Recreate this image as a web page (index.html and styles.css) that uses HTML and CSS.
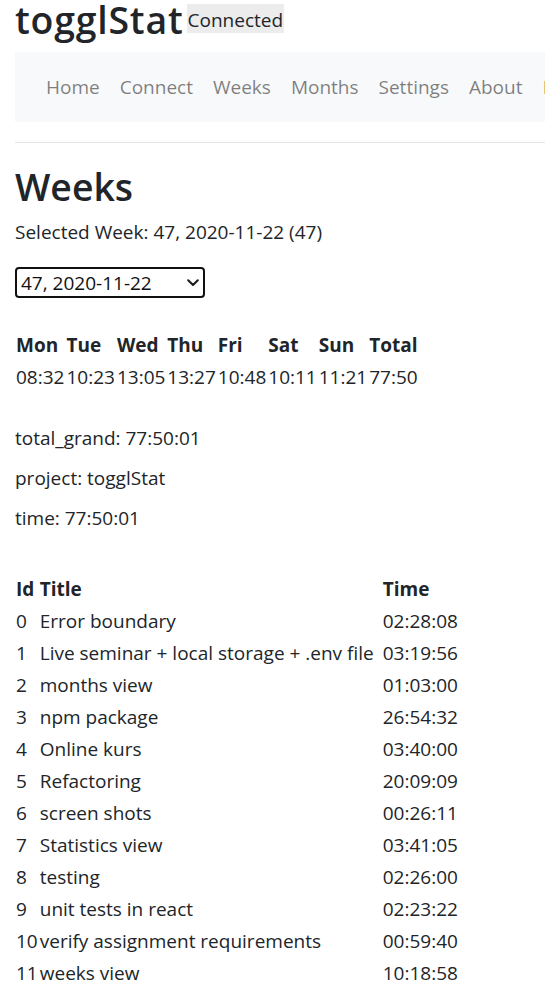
FILE: index.html
```html
<!DOCTYPE html>
<html lang="en">
<head>
<meta charset="utf-8">
<title>togglStat</title>
<link rel="stylesheet" href="styles.css">
</head>
<body>
<div class="app">
  <header class="brand">
    <h1 class="brand-title">togglStat</h1>
    <span class="status">Connected</span>
  </header>
  <nav class="navbar">
    <a class="nav-link" href="#">Home</a>
    <a class="nav-link" href="#">Connect</a>
    <a class="nav-link" href="#">Weeks</a>
    <a class="nav-link" href="#">Months</a>
    <a class="nav-link" href="#">Settings</a>
    <a class="nav-link" href="#">About</a>
    <a class="nav-link nav-warn" href="#">Logout</a>
  </nav>
  <hr class="divider">
  <main>
    <h1 class="page-title">Weeks</h1>
    <p class="selected">Selected Week: 47, 2020-11-22 (47)</p>
    <div class="select-wrap">
      <select class="week-select"><option>47, 2020-11-22</option></select>
      <svg class="chev" width="12" height="8" viewBox="0 0 12 8"><polyline points="1.2,1.2 6,6 10.8,1.2" fill="none" stroke="#1a1a1a" stroke-width="2" stroke-linecap="round" stroke-linejoin="round"/></svg>
    </div>
    <table class="days">
      <thead>
        <tr><th>Mon</th><th>Tue</th><th>Wed</th><th>Thu</th><th>Fri</th><th>Sat</th><th>Sun</th><th>Total</th></tr>
      </thead>
      <tbody>
        <tr><td>08:32</td><td>10:23</td><td>13:05</td><td>13:27</td><td>10:48</td><td>10:11</td><td>11:21</td><td>77:50</td></tr>
      </tbody>
    </table>
    <div class="totals">
      <p>total_grand: 77:50:01</p>
      <p>project: togglStat</p>
      <p>time: 77:50:01</p>
    </div>
    <table class="items">
      <thead>
        <tr><th>Id</th><th class="col-title">Title</th><th>Time</th></tr>
      </thead>
      <tbody>
        <tr><td>0</td><td>Error boundary</td><td>02:28:08</td></tr>
        <tr><td>1</td><td>Live seminar + local storage + .env file</td><td>03:19:56</td></tr>
        <tr><td>2</td><td>months view</td><td>01:03:00</td></tr>
        <tr><td>3</td><td>npm package</td><td>26:54:32</td></tr>
        <tr><td>4</td><td>Online kurs</td><td>03:40:00</td></tr>
        <tr><td>5</td><td>Refactoring</td><td>20:09:09</td></tr>
        <tr><td>6</td><td>screen shots</td><td>00:26:11</td></tr>
        <tr><td>7</td><td>Statistics view</td><td>03:41:05</td></tr>
        <tr><td>8</td><td>testing</td><td>02:26:00</td></tr>
        <tr><td>9</td><td>unit tests in react</td><td>02:23:22</td></tr>
        <tr><td>10</td><td>verify assignment requirements</td><td>00:59:40</td></tr>
        <tr><td>11</td><td>weeks view</td><td>10:18:58</td></tr>
      </tbody>
    </table>
  </main>
</div>
</body>
</html>
```
FILE: styles.css
```css
html {
  overflow: hidden;
}
body {
  margin: 0;
  font-family: "Open Sans", "Noto Sans", sans-serif;
  font-size: 19px;
  line-height: 30px;
  color: #212529;
  background: #fff;
}
.app {
  width: 760px;
  padding: 0 15px;
}
.brand {
  display: flex;
  align-items: flex-start;
  height: 52px;
}
.brand-title {
  margin: 0;
  font-size: 37.4px;
  line-height: 40px;
  font-weight: 600;
  letter-spacing: 0.8px;
}
.status {
  display: block;
  margin-top: 4px;
  margin-left: 3px;
  height: 29px;
  padding: 3px 1px 0;
  box-sizing: border-box;
  line-height: 26px;
  background: #ececec;
  color: #212529;
  white-space: nowrap;
}
.navbar {
  display: flex;
  background: #f8f9fa;
  padding: 10px 21px;
}
.nav-link {
  padding: 10px 10px;
  color: rgba(0, 0, 0, 0.5);
  text-decoration: none;
  white-space: nowrap;
}
.nav-warn {
  color: #d3ad6a;
}
.divider {
  margin: 20px 0 0;
  border: 0;
  border-top: 1px solid rgba(0, 0, 0, 0.1);
  height: 0;
}
.page-title {
  margin: 24px 0 0;
  font-size: 37.4px;
  line-height: 40px;
  font-weight: 600;
}
.selected {
  margin: 10px 0 20px;
}
.select-wrap {
  position: relative;
  width: 190px;
  height: 31px;
}
.week-select {
  appearance: none;
  -webkit-appearance: none;
  display: block;
  width: 190px;
  height: 31px;
  margin: 0;
  padding: 0 0 0 4px;
  border: 2px solid #111;
  border-radius: 4px;
  background: #fff;
  font-family: inherit;
  font-size: 19px;
  color: #111;
}
.chev {
  position: absolute;
  right: 6px;
  top: 12px;
}
table {
  border-collapse: collapse;
}
th, td {
  padding: 1px;
  text-align: left;
  vertical-align: top;
  white-space: nowrap;
}
th {
  font-weight: 700;
}
.days {
  margin-top: 31px;
}
.totals {
  margin-top: 30px;
}
.totals p {
  margin: 0 0 10px;
}
.items {
  margin-top: 40px;
}
.col-title {
  min-width: 341px;
}
```
